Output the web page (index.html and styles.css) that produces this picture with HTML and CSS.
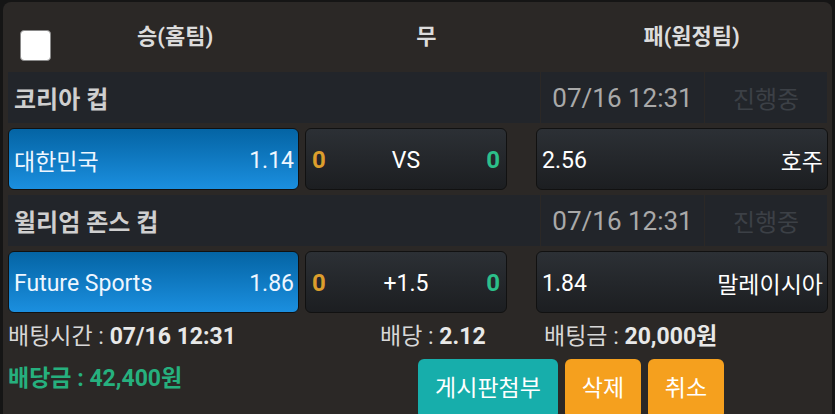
FILE: index.html
```html
<!DOCTYPE html>
<html lang="ko">
<head>
    <meta charset="UTF-8">
    <title>Bet Slip</title>
    <link rel="stylesheet" href="styles.css">
</head>
<body>
    <div class="panel">
        <!-- Column headers -->
        <div class="head">
            <span class="check"></span>
            <span class="head-home">승(홈팀)</span>
            <span class="head-draw">무</span>
            <span class="head-away">패(원정팀)</span>
        </div>

        <!-- Match 1 -->
        <div class="league">
            <div class="league-name">코리아 컵</div>
            <div class="league-date">07/16 12:31</div>
            <div class="league-state">진행중</div>
        </div>
        <div class="bet">
            <div class="pick home">
                <span>대한민국</span>
                <span>1.14</span>
            </div>
            <div class="pick draw">
                <span class="score-home">0</span>
                <span>VS</span>
                <span class="score-away">0</span>
            </div>
            <div class="pick away">
                <span>2.56</span>
                <span>호주</span>
            </div>
        </div>

        <!-- Match 2 -->
        <div class="league">
            <div class="league-name">윌리엄 존스 컵</div>
            <div class="league-date">07/16 12:31</div>
            <div class="league-state">진행중</div>
        </div>
        <div class="bet">
            <div class="pick home">
                <span>Future Sports</span>
                <span>1.86</span>
            </div>
            <div class="pick draw">
                <span class="score-home">0</span>
                <span>+1.5</span>
                <span class="score-away">0</span>
            </div>
            <div class="pick away">
                <span>1.84</span>
                <span>말레이시아</span>
            </div>
        </div>

        <!-- Summary -->
        <div class="info">
            <div class="info-time">배팅시간 : <b>07/16 12:31</b></div>
            <div class="info-odds">배당 : <b>2.12</b></div>
            <div class="info-amount">배팅금 : <b>20,000원</b></div>
        </div>
        <div class="footer">
            <div class="payout">배당금 : 42,400원</div>
            <div class="actions">
                <button type="button" class="btn btn-board">게시판첨부</button>
                <button type="button" class="btn btn-orange">삭제</button>
                <button type="button" class="btn btn-orange">취소</button>
            </div>
        </div>
    </div>
</body>
</html>
```

FILE: styles.css
```css
body {
    margin: 0;
    background-color: #151515;
    font-family: Roboto, "Noto Sans CJK KR", sans-serif;
    color: #fff;
    overflow: hidden;
}

.panel {
    margin: 2px 3px 0 3px;
    padding: 0 4px 20px 5px;
    background-color: #2b2826;
    border-radius: 8px 8px 0 0;
    height: 430px;
    box-sizing: border-box;
}

/* Column headers */
.head {
    height: 70px;
    display: flex;
    align-items: center;
    font-size: 22px;
    font-weight: bold;
    color: #dcdcdc;
}

.check {
    width: 29px;
    height: 29px;
    margin: 16px 0 0 12px;
    background-color: #fff;
    border: 1px solid #8a8a8a;
    border-radius: 4px;
}

.head-home {
    margin-left: 86px;
    margin-top: -6px;
}

.head-draw {
    margin-left: 203px;
    margin-top: -6px;
}

.head-away {
    margin-left: 207px;
    margin-top: -6px;
}

/* League rows */
.league {
    display: flex;
    height: 51px;
    gap: 1px;
}

.league > div {
    background-color: #22252a;
    display: flex;
    align-items: center;
}

.league-name {
    width: 532px;
    padding-left: 6px;
    box-sizing: border-box;
    font-size: 24px;
    font-weight: bold;
    color: #cfcfcf;
}

.league-date {
    width: 163px;
    justify-content: center;
    font-size: 26px;
    color: #a9a9a9;
}

.league-state {
    width: 122px;
    justify-content: center;
    font-size: 24px;
    color: #3c4046;
}

/* Pick buttons */
.bet {
    display: flex;
    margin: 5px 0;
    height: 62px;
}

.pick {
    display: flex;
    align-items: center;
    justify-content: space-between;
    box-sizing: border-box;
    border: 1px solid #111;
    border-radius: 6px;
    font-size: 23px;
    padding: 2px 4px 0 5px;
    background: linear-gradient(#2c3035, #1c1e21);
}

.home {
    width: 291px;
    background: linear-gradient(#0464a4, #1b8fdf);
    color: #eef6ff;
}

.draw {
    width: 202px;
    margin-left: 6px;
    padding: 2px 6px 0 6px;
}

.away {
    width: 292px;
    margin-left: 29px;
}

.score-home,
.score-away {
    font-weight: bold;
    font-size: 24px;
}

.score-home {
    color: #dc9e2c;
}

.score-away {
    color: #2cbf8a;
}

/* Summary */
.info {
    display: flex;
    align-items: center;
    height: 40px;
    font-size: 23px;
    color: #d8d8d8;
    margin-top: -4px;
}

.info b {
    color: #e8e8e8;
}

.info-time {
    width: 372px;
}

.info-odds {
    width: 164px;
}

.footer {
    display: flex;
    align-items: flex-start;
}

.payout {
    width: 410px;
    padding-top: 5px;
    font-size: 23px;
    font-weight: bold;
    color: #26b07e;
}

.actions {
    display: flex;
    gap: 7px;
    margin-top: 5px;
}

.btn {
    font-family: Roboto, "Noto Sans CJK KR", sans-serif;
    font-size: 23px;
    color: #fff;
    border: none;
    border-radius: 6px;
    height: 60px;
    padding: 0 0 6px 0;
}

.btn-board {
    width: 140px;
    background-color: #17aeab;
}

.btn-orange {
    width: 76px;
    background-color: #f5a01e;
}
```
